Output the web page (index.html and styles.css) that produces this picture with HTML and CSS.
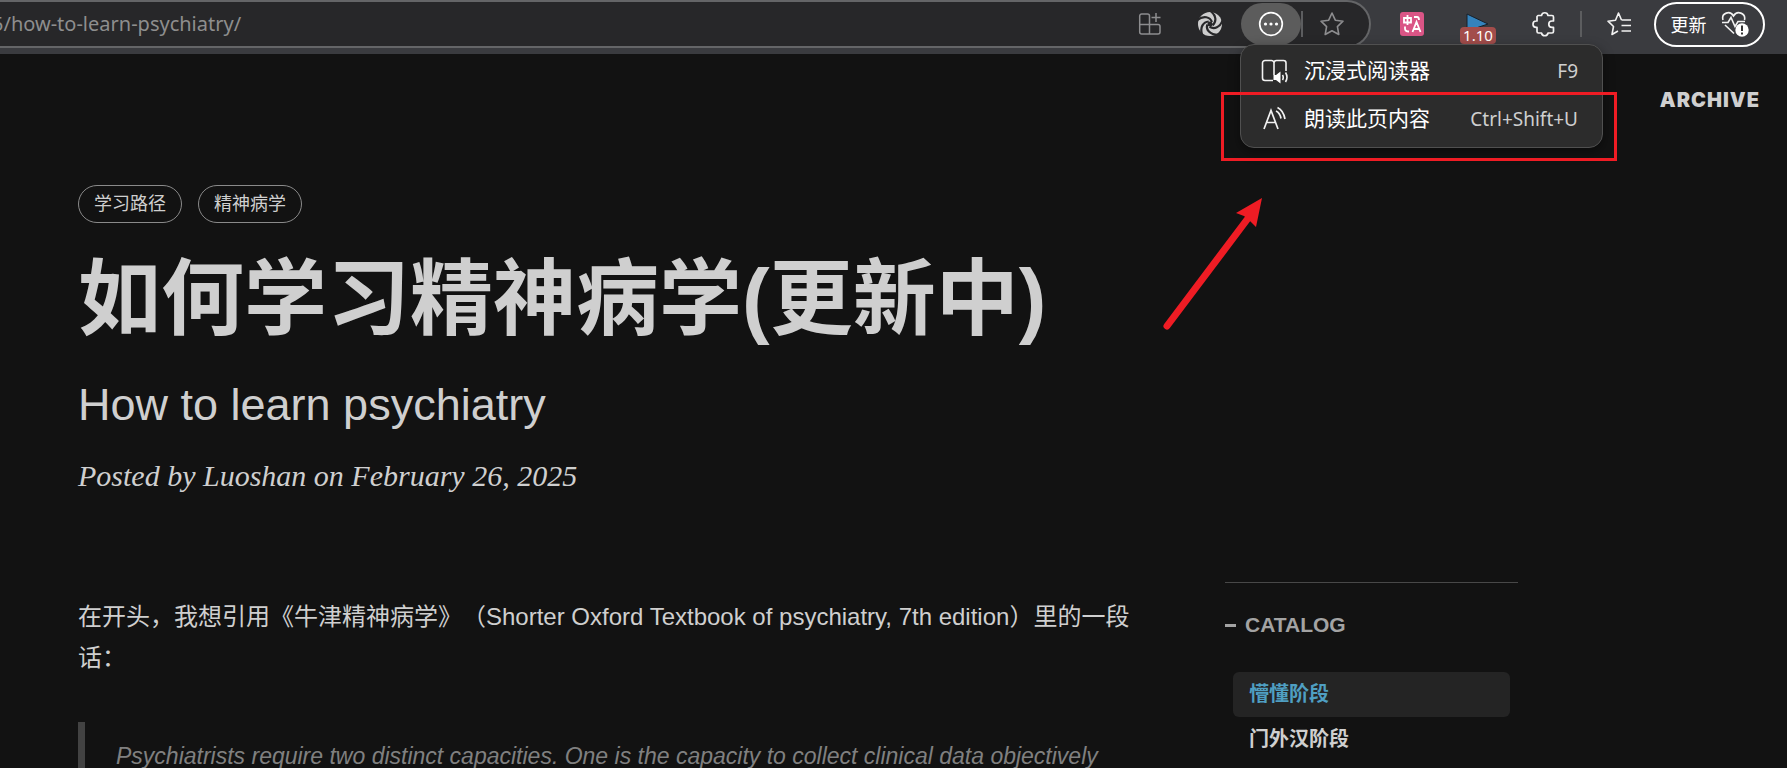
FILE: index.html
```html
<!DOCTYPE html>
<html lang="zh-CN">
<head>
<meta charset="utf-8">
<title>如何学习精神病学(更新中)</title>
<link rel="stylesheet" href="styles.css">
</head>
<body>
<header class="toolbar">
  <div class="address">
    <input class="url" type="text" aria-label="地址" value="5/how-to-learn-psychiatry/">
    <button class="tool apps" aria-label="应用"><svg width="24" height="24" viewBox="0 0 24 24" fill="none" stroke="#8d8d8f" stroke-width="1.5"><path d="M11.5 12.500H1.700V4a2 2 0 0 1 2-2h5.800a2 2 0 0 1 2 2v18M11.500 12.500H20a2 2 0 0 1 2 2V20a2 2 0 0 1-2 2H3.700a2 2 0 0 1-2-2v-7.500M18 1v9M13.500 5.500h9"/></svg></button>
    <button class="tool swirl" aria-label="扩展"><svg width="26" height="26" viewBox="-13 -13 26 26"><circle r="12" fill="#cdcdcd"/><circle r="2.500" fill="#272729"/><g fill="none" stroke="#272729" stroke-width="2.200"><path id="gap" d="M2-2C0-7-6-9-13-4"/><use href="#gap" transform="rotate(72)"/><use href="#gap" transform="rotate(144)"/><use href="#gap" transform="rotate(216)"/><use href="#gap" transform="rotate(288)"/></g></svg></button>
    <div class="more-wrap">
      <button class="more" aria-label="更多" aria-expanded="true"><svg width="26" height="26" viewBox="0 0 26 26" fill="none" stroke="#fff" stroke-width="1.700"><circle cx="13" cy="13" r="11.300"/><g fill="#fff" stroke="none"><circle cx="7.500" cy="13" r="1.600"/><circle cx="13" cy="13" r="1.600"/><circle cx="18.500" cy="13" r="1.600"/></g></svg></button>
      <div class="menu" role="menu">
        <button class="menu-item" role="menuitem"><svg width="28" height="26" viewBox="0 0 28 26" fill="none" stroke="#f2f2f2" stroke-width="1.600"><path d="M12 22.500H4a2.500 2.500 0 0 1-2.500-2.500V5A2.500 2.500 0 0 1 4 2.500h6.500A2.500 2.500 0 0 1 13 5v12M13 5a2.500 2.500 0 0 1 2.500-2.500h7A2.500 2.500 0 0 1 25 5v8M21.500 17q1.500 2.500 0 5M24.500 14.500q3 4.800 0 9.500"/><path d="M12.500 17h2.500l4.500-3.500v12L15 22h-2.500z" fill="#fff" stroke="none"/></svg><span class="label">沉浸式阅读器</span><kbd>F9</kbd></button>
        <button class="menu-item" role="menuitem"><svg width="28" height="26" viewBox="0 0 28 26" fill="none" stroke="#f2f2f2" stroke-width="1.700"><path d="M3 23L10 4.500l7 18.500M5.500 16.500h9M15 5q4 2 5 7.500M16.500 1.500q6 3 7.500 11.500"/></svg><span class="label">朗读此页内容</span><kbd>Ctrl+Shift+U</kbd></button>
      </div>
    </div>
    <span class="divider"></span>
    <button class="tool star" aria-label="收藏"><svg width="26" height="26" viewBox="0 0 26 26" fill="none" stroke="#8d8d8f" stroke-width="1.600" stroke-linejoin="round"><path d="M13 2l3.300 7.200 7.700 1-5.600 5.400 1.400 7.900L13 19.700l-6.800 3.800 1.400-7.900L2 10.200l7.700-1z"/></svg></button>
  </div>
  <div class="extensions">
    <button class="translate" aria-label="翻译"><svg width="24" height="24" viewBox="0 0 24 24" fill="none" stroke="#fff" stroke-width="1.800"><rect width="24" height="24" rx="3" fill="#da5586" stroke="none"/><path d="M4 6h7v4.500H4zM7.500 3v10M14 5h3q2 0 2 3M5 14.500v2q0 3 4 3M12.500 20l4-10 4 10M14 17h5"/></svg></button>
    <button class="speed" aria-label="播放速度 1.10"><svg width="24" height="18" viewBox="0 0 24 18"><path d="M1 1l21 10-21 7z" fill="#3483bd" stroke="#17202a"/></svg><span class="badge">1.10</span></button>
    <button class="tool" aria-label="扩展管理"><svg width="24" height="26" viewBox="0 0 24 26" fill="none" stroke="#f2f2f2" stroke-width="1.700" stroke-linejoin="round"><path d="M6 4.500h3.500a3.300 3.300 0 0 1 6.500 0H20A1.500 1.500 0 0 1 21.500 6v4H20a3.200 3.200 0 0 0 0 6.400h1.500V20.500A1.500 1.500 0 0 1 20 22h-4a3.300 3.300 0 0 1-6.500 0H6.500A1.500 1.500 0 0 1 5 20.500v-4.100h-.8a3.200 3.200 0 0 1 0-6.400H5V5.500z"/></svg></button>
    <span class="divider"></span>
    <button class="tool" aria-label="收藏夹"><svg width="26" height="26" viewBox="0 0 26 26" fill="none" stroke="#f2f2f2" stroke-width="1.600" stroke-linejoin="round"><path d="M15.500 9L12.500 2 9.500 9.200l-7.500 1 5.500 5.300L6 23.500 12 20M15.500 9h9.500M15.500 14.500h9.500M15.500 20h9.500"/></svg></button>
    <button class="update">更新 <svg width="28" height="26" viewBox="0 0 28 26" fill="none" stroke="#f2f2f2" stroke-width="1.600"><path d="M2 9C0 2 9-1 12.500 5 16-1 25 2 23.500 9M1 11.500h6l3-5 4 9 3-5h7M4 14l9 8.500"/><circle cx="21" cy="19" r="6.700" fill="#fff" stroke="none"/><path d="M21 14.500v5.500M21 21.500v2" stroke="#333" stroke-width="2"/></svg></button>
  </div>
</header>
<nav class="site-nav"><a href="#archive">ARCHIVE</a></nav>
<main class="page">
  <section class="intro">
    <div class="tags"><a href="#path">学习路径</a><a href="#psychiatry">精神病学</a></div>
    <h1>如何学习精神病学(更新中)</h1>
    <h2>How to learn psychiatry</h2>
    <p class="meta">Posted by Luoshan on February 26, 2025</p>
  </section>
  <div class="columns">
    <article>
      <p>在开头，我想引用《牛津精神病学》（Shorter Oxford Textbook of psychiatry, 7th edition）里的一段话：</p>
      <blockquote>Psychiatrists require two distinct capacities. One is the capacity to collect clinical data objectively</blockquote>
    </article>
    <aside>
      <h5><span class="dash"></span>CATALOG</h5>
      <ul>
        <li><a class="active" href="#s1">懵懂阶段</a></li>
        <li><a href="#s2">门外汉阶段</a></li>
      </ul>
    </aside>
  </div>
</main>
<div class="mark-box"></div>
<svg class="mark-arrow" width="110" height="140" viewBox="0 0 110 140"><path d="M8 131L90 22" stroke="#ef1c24" stroke-width="7" stroke-linecap="round"/><path d="M103 3L97 32l-7-7-5-4-8-3z" fill="#ef1c24"/></svg>
</body>
</html>
```
FILE: styles.css
```css
* { box-sizing: border-box; }
html { height: 100%; }
body {
  margin: 0;
  height: 100%;
  overflow: hidden;
  display: flex;
  flex-direction: column;
  position: relative;
  background: #121212;
  color: #cfcfcf;
  font-family: "Liberation Sans", "Noto Sans CJK SC", sans-serif;
  text-spacing-trim: space-all;
}
button { border: 0; padding: 0; background: none; color: inherit; font: inherit; display: flex; align-items: center; justify-content: center; }
a { color: inherit; text-decoration: none; }
svg { display: block; flex: none; }

.toolbar {
  flex: none;
  display: flex;
  height: 54px;
  padding-bottom: 6px;
  background: #3a3b3f;
  font-family: "Noto Sans", "Noto Sans CJK SC", sans-serif;
}
.address {
  flex: 1;
  min-width: 0;
  display: flex;
  align-items: center;
  padding-right: 24px;
  border: solid #646567;
  border-width: 2px 2px 2px 0;
  border-radius: 0 24px 24px 0;
  background: #272729;
}
.url {
  flex: 1;
  min-width: 0;
  margin-left: -8px;
  padding: 0;
  border: 0;
  background: none;
  color: #8e8e8e;
  font: 20px/28px "Noto Sans", sans-serif;
}
.swirl { margin: 0 18px 0 35px; }
.more-wrap { position: relative; }
.more { width: 60px; height: 42px; border-radius: 21px; background: #5c5c5c; }
.divider { width: 2px; height: 26px; background: #5c5d5f; }
.address .star { margin-left: 16px; }
.menu {
  position: absolute;
  z-index: 2;
  top: 41px;
  left: -1px;
  width: 363px;
  padding: 2px 0 4px;
  border: 1px solid #505050;
  border-radius: 14px;
  background: #2c2c2c;
  box-shadow: 0 4px 12px #00000066;
}
.menu-item { width: 100%; height: 48px; padding: 0 24px 0 20px; gap: 15px; color: #fff; }
.label { flex: 1; padding-bottom: 4px; text-align: left; font: 21px/30px "Noto Sans CJK SC", sans-serif; }
kbd { color: #cfcfcf; font: 19px/28px "Noto Sans", sans-serif; }

.extensions { flex: none; display: flex; align-items: center; padding: 0 22px 0 29px; }
.speed { position: relative; align-items: flex-start; width: 36px; height: 22px; margin: 0 36px; }
.badge {
  position: absolute;
  top: 14px;
  left: 0;
  width: 36px;
  height: 17px;
  border-radius: 4px;
  background: #a34d4b;
  color: #fff;
  font: 15px/17px "Noto Sans", sans-serif;
}
.extensions .divider { margin: 0 24px; }
.update {
  width: 111px;
  height: 45px;
  margin-left: 22px;
  gap: 14px;
  border: 2px solid #fff;
  border-radius: 23px;
  color: #fff;
  font-size: 18px;
}

.site-nav { display: flex; justify-content: flex-end; padding: 34px 27px 0; font: 900 20px/24px Inter, sans-serif; letter-spacing: 1px; }
.page { padding: 73px 78px 0; }
.tags { display: flex; gap: 16px; }
.tags a { padding: 0 15px; border: 1px solid #8a8a8a; border-radius: 19px; font-size: 18px; line-height: 36px; }
h1 { margin: 29px 0 0; font-size: 83px; line-height: 96px; }
h2 { margin: 29px 0 0; font-weight: 400; font-size: 45px; line-height: 56px; }
.meta { margin: 23px 0 0; font: italic 30px/40px "Liberation Serif", serif; }
.columns { display: grid; grid-template-columns: 1069px 293px; gap: 78px; margin-top: 86px; }
article { font-size: 24px; line-height: 41px; }
article p { margin: 14px 0 44px; }
blockquote { margin: 0; padding: 14px 0 20px 31px; border-left: 7px solid #424242; color: #808080; font-style: italic; font-size: 23px; }
aside { border-top: 1px solid #484848; }
h5 { display: flex; align-items: center; gap: 9px; margin: 30px 0 35px; color: #a3a3a3; font: bold 21px/24px "Liberation Sans", sans-serif; }
.dash { width: 11px; height: 3px; background: currentColor; }
ul { margin: 0 8px; padding: 0; list-style: none; }
li a { display: block; padding: 0 16px; border-radius: 6px; font-weight: 700; font-size: 20px; line-height: 45px; }
.active { background: #242424; color: #4f9fc2; }

.mark-box { position: absolute; z-index: 3; top: 92px; left: 1221px; width: 396px; height: 69px; border: 3px solid #ef1c24; }
.mark-arrow { position: absolute; z-index: 3; top: 195px; left: 1159px; }
```
